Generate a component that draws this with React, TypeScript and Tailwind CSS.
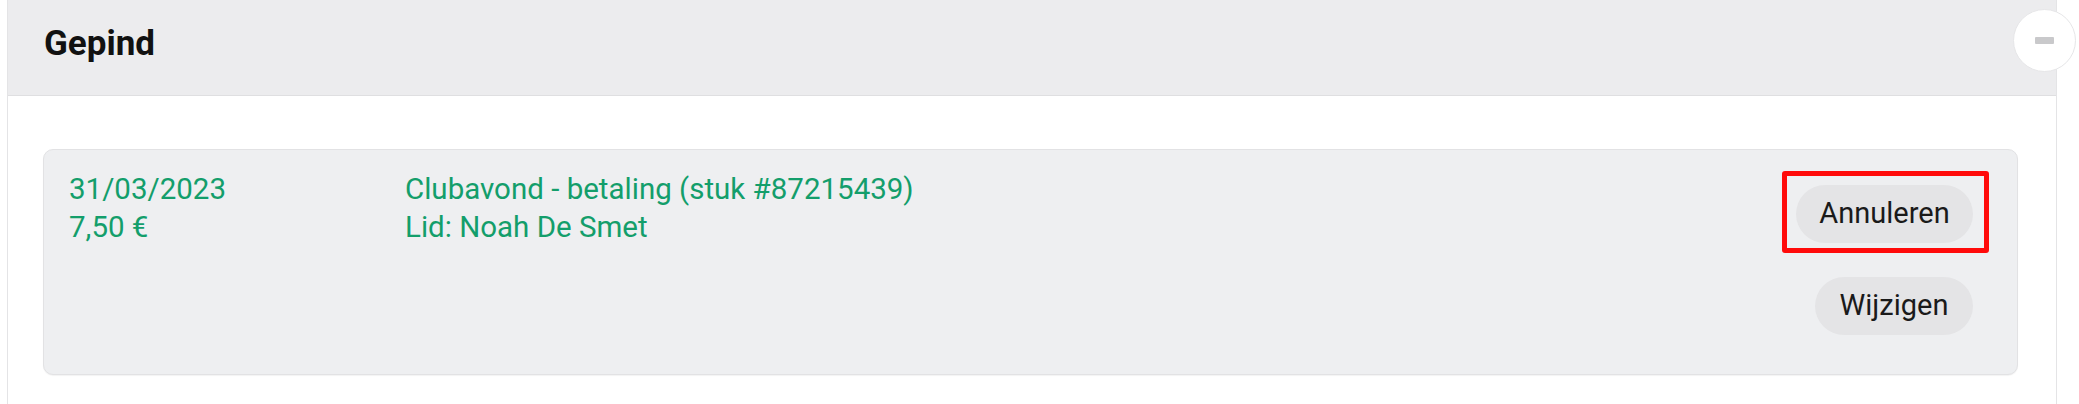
import React from 'react';

const App = () => {
  return (
    <div className="relative w-[2079px] h-[404px] bg-white overflow-hidden" style={{ fontFamily: 'Roboto, "Noto Sans", sans-serif' }}>
      <div className="ml-[7px] w-[2050px] h-full border-x border-[#e4e4e6] bg-white">
        {/* header */}
        <div className="h-[96px] bg-[#ececee] border-b border-[#dfdfe1] pl-[36px] pt-[24px]">
          <h2 className="text-[35px] leading-[40px] font-bold text-[#111]">Gepind</h2>
        </div>

        {/* body */}
        <div className="pt-[53px] pl-[35px] pr-[38px]">
          <div className="h-[226px] rounded-[10px] border border-[#e2e2e4] bg-[#eeeff1] shadow-[0_1px_1px_rgba(0,0,0,0.05)] flex items-start pl-[25px] pr-[44px]">
            <div className="w-[336px] pt-[20px] text-[29.5px] leading-[38px] text-[#139e6b]">
              <div>31/03/2023</div>
              <div>7,50 €</div>
            </div>
            <div className="flex-1 pt-[20px] text-[29.5px] leading-[38px] text-[#139e6b]">
              <div>Clubavond - betaling (stuk #87215439)</div>
              <div>Lid: Noah De Smet</div>
            </div>
            <div className="pt-[35px] flex flex-col items-end gap-[34px]">
              <div className="relative">
                <button className="h-[58px] w-[177px] rounded-full bg-[#e4e4e6] text-[29px] text-[#1a1a1a]">
                  Annuleren
                </button>
                <div className="absolute left-[-14px] top-[-14px] w-[207px] h-[82px] border-[5px] border-[#ff0a0a] rounded-[3px] pointer-events-none" />
              </div>
              <button className="h-[58px] w-[158px] rounded-full bg-[#e4e4e6] text-[29px] text-[#1a1a1a]">
                Wijzigen
              </button>
            </div>
          </div>
        </div>
      </div>

      {/* collapse button */}
      <button className="absolute left-[2013px] top-[9px] w-[63px] h-[63px] rounded-full bg-white border border-[#e6e6e8] flex items-center justify-center">
        <span className="block w-[19px] h-[7px] rounded-[1px] bg-[#c9c9cb]" />
      </button>
    </div>
  );
};

export default App;
